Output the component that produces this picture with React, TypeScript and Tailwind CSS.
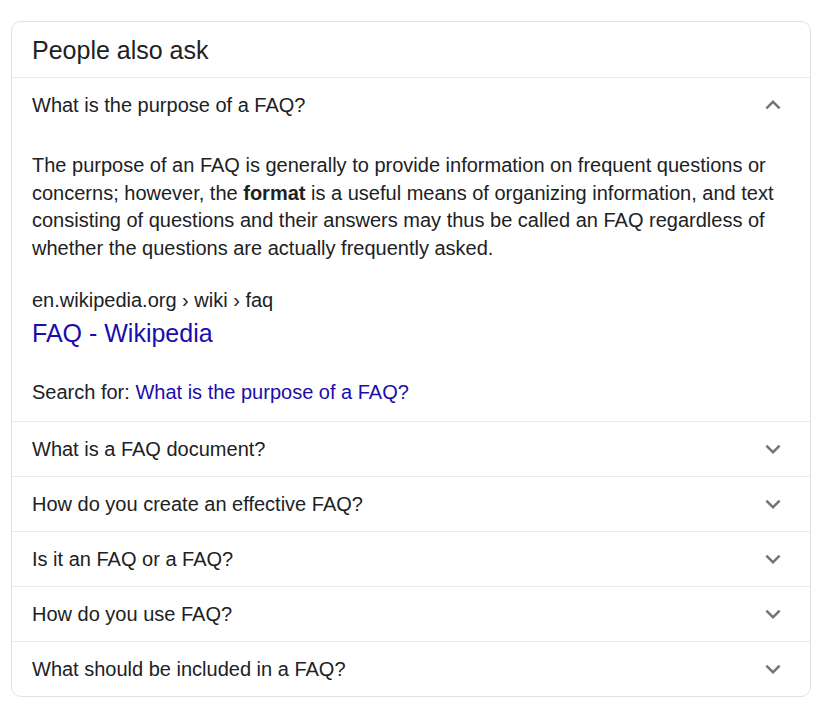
import { ReactNode } from "react";

const questions = [
  "What is a FAQ document?",
  "How do you create an effective FAQ?",
  "Is it an FAQ or a FAQ?",
  "How do you use FAQ?",
  "What should be included in a FAQ?",
];

function Chevron({ up }: { up?: boolean }) {
  return (
    <svg
      viewBox="0 0 24 24"
      className={up ? "h-[30px] w-[30px] rotate-180 fill-[#70757a]" : "h-[30px] w-[30px] fill-[#70757a]"}
    >
      <path d="M16.59 8.59L12 13.17 7.41 8.59 6 10l6 6 6-6z" />
    </svg>
  );
}

function QuestionRow({ children, up }: { children: ReactNode; up?: boolean }) {
  return (
    <div className="flex h-[54px] items-center justify-between pl-5 pr-[22px]">
      <span className="text-[20px] leading-[27px] text-[#202124]">{children}</span>
      <Chevron up={up} />
    </div>
  );
}

export default function App() {
  return (
    <div
      className="min-h-[703px] bg-white pt-[21px] pl-[11px]"
      style={{ fontFamily: '"Liberation Sans", Arial, sans-serif' }}
    >
      <div className="w-[800px] overflow-hidden rounded-[10px] border border-[#dfe1e5]">
        <div className="flex h-[56px] items-center border-b border-[#e8eaed] px-5">
          <h2 className="text-[25px] leading-[30px] text-[#202124]">People also ask</h2>
        </div>

        <div className="border-b border-[#e8eaed]">
          <QuestionRow up>What is the purpose of a FAQ?</QuestionRow>
          <div className="px-5 pt-[20px] pb-[15px] text-[#202124]">
            <p className="text-[20px] leading-[27.5px]">
              The purpose of an FAQ is generally to provide information on frequent questions or
              concerns; however, the <b>format</b> is a useful means of organizing information, and
              text consisting of questions and their answers may thus be called an FAQ regardless of
              whether the questions are actually frequently asked.
            </p>
            <div className="mt-[25px] text-[20px] leading-[27px]">en.wikipedia.org › wiki › faq</div>
            <a href="#" className="mt-[3px] block text-[25px] leading-[33px] text-[#1a0dab]">
              FAQ - Wikipedia
            </a>
            <div className="mt-[29px] text-[20px] leading-[27px]">
              Search for: <a href="#" className="text-[#1a0dab]">What is the purpose of a FAQ?</a>
            </div>
          </div>
        </div>

        {questions.map((q, i) => (
          <div key={q} className={i < questions.length - 1 ? "border-b border-[#e8eaed]" : ""}>
            <QuestionRow>{q}</QuestionRow>
          </div>
        ))}
      </div>
    </div>
  );
}
